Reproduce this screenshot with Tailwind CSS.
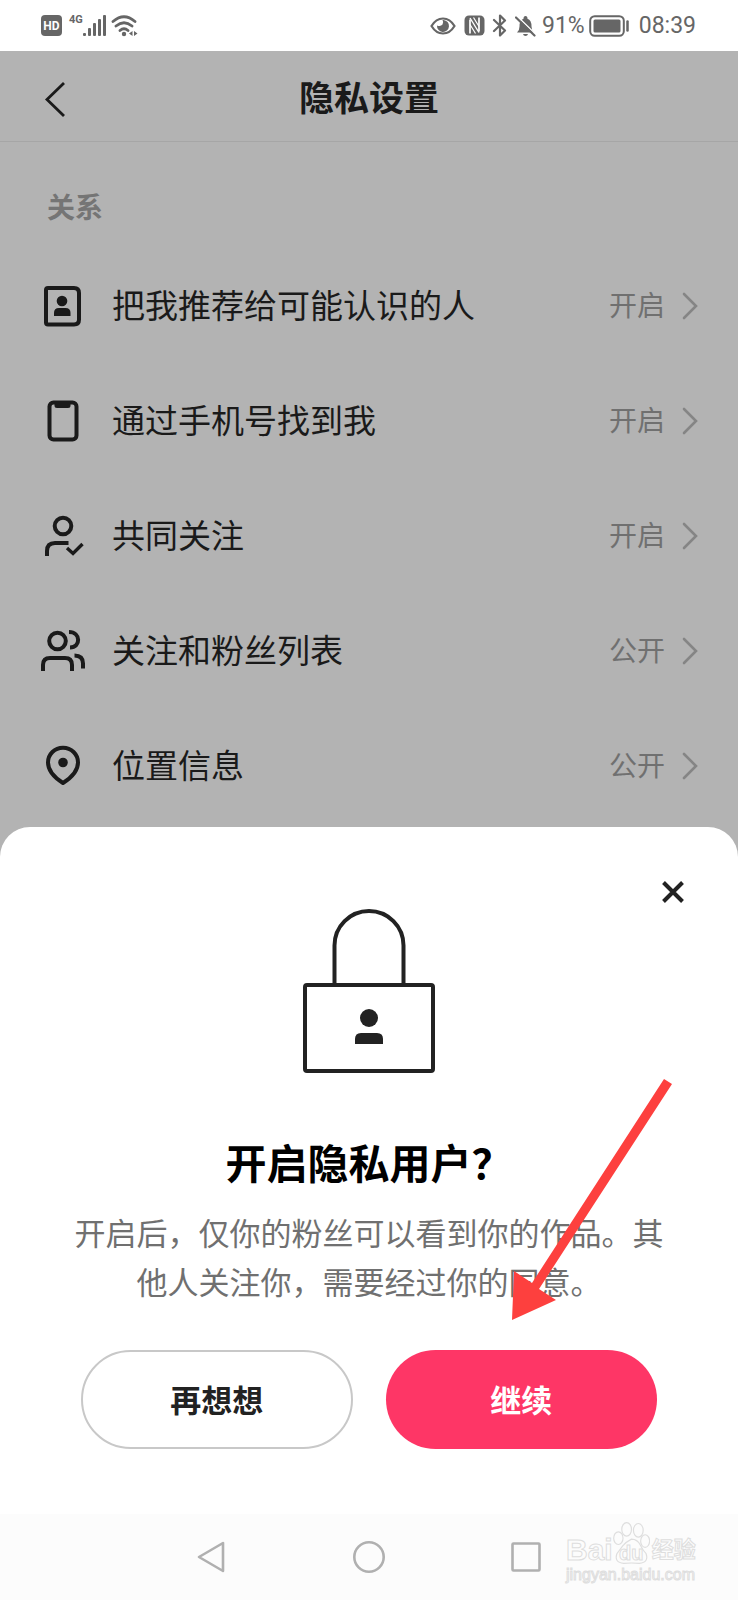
<!DOCTYPE html>
<html lang="zh-CN">
<head>
<meta charset="utf-8">
<meta name="viewport" content="width=device-width, initial-scale=1">
<title>隐私设置</title>
<script src="https://cdn.jsdelivr.net/npm/@tailwindcss/browser@4"></script>
</head>
<body class="flex min-h-screen flex-col bg-[#b3b3b3] font-['Noto_Sans_CJK_SC',sans-serif] text-[#1a1a1a]">

<!-- Status bar -->
<div class="flex h-[51px] items-center justify-between bg-white pr-[42px] pl-[41px] font-[Roboto,sans-serif] text-[#666]">
  <div class="flex items-center">
    <span class="flex h-[21px] w-[21px] items-center justify-center rounded-[4px] bg-[#666] text-[12px] leading-none font-bold text-white">HD</span>
    <span class="ml-[7px] h-[23px] text-[11px] leading-[12px] font-bold">4G</span>
    <svg class="h-[22px] w-[24px]" viewBox="0 0 24 22" fill="#666" aria-hidden="true"><rect x="0" y="18" width="3" height="3" rx="1"/><rect x="5" y="13" width="3" height="8" rx="1"/><rect x="10" y="8" width="3" height="13" rx="1"/><rect x="15" y="4" width="3" height="17" rx="1"/><rect x="20" y="0" width="3" height="21" rx="1"/></svg>
    <svg class="ml-[4px] h-[22px] w-[27px]" viewBox="0 0 27 22" fill="none" stroke="#666" stroke-width="2.8" stroke-linecap="round" aria-hidden="true"><path d="M2 6.5Q13 -3 24 6.500M5 11q8-6.500 16 0M9 15.500q4-3.500 8 0"/><circle cx="13" cy="19" r="2.2" fill="#666" stroke="none"/><path d="M21.500 16v5l-3.500-2.500zM23 16v5l3.500-2.500z" fill="#666" stroke="none"/></svg>
  </div>
  <div class="flex items-center">
    <svg class="h-[18px] w-[26px]" viewBox="0 0 26 18" aria-hidden="true"><path d="M1.500 9Q6 1.500 13 1.500T24.500 9Q20 16.500 13 16.500T1.500 9z" fill="none" stroke="#666" stroke-width="2.200"/><path d="M13.500 3A6 6 0 1 1 7 8.500Q10.500 10 12.500 7.600Q14 5.400 12.500 3z" fill="#666"/></svg>
    <svg class="ml-[8px] h-[21px] w-[21px]" viewBox="0 0 21 21" aria-hidden="true"><rect x=".5" y=".5" width="20" height="20" rx="4.500" fill="#666"/><path d="M6 18.500V4.500M15 16.500V2.500" stroke="#fff" stroke-width="1.700"/><path d="M6 3l9 14.500" stroke="#fff" stroke-width="1.400"/><path d="M9.500 2.500l5.500 9M6 9.500l5.500 9" stroke="#fff" stroke-width="1.200"/></svg>
    <svg class="ml-[7px] h-[23px] w-[16px]" viewBox="0 0 16 23" fill="none" stroke="#666" stroke-width="2.2" stroke-linejoin="round" stroke-linecap="round" aria-hidden="true"><path d="M2 6l11 10.500-5 5V1.500l5 5L2 17"/></svg>
    <svg class="ml-[7px] h-[22px] w-[21px]" viewBox="0 0 21 22" aria-hidden="true"><path d="M2 17.500q2.500-2 2.500-6 0-6.500 4-7.700Q8.500 1 10.500 1t2 2.800q4 1.200 4 7.700 0 4 2.500 6z" fill="#666"/><path d="M8 19h5q-.5 2-2.500 2T8 19z" fill="#666"/><path d="M2.500 1.500L21 19.500" stroke="#fff" stroke-width="1.500"/><path d="M1 2.500L19.500 20.500" stroke="#666" stroke-width="2.200" stroke-linecap="round"/></svg>
    <span class="ml-[6px] text-[23px] leading-none">91%</span>
    <svg class="ml-[4px] h-[22px] w-[41px]" viewBox="0 0 41 22" aria-hidden="true"><rect x="1.200" y="1.200" width="33.600" height="19.600" rx="4.500" fill="none" stroke="#666" stroke-width="2"/><rect x="4.500" y="4.500" width="27" height="13" rx="1.500" fill="#666"/><path d="M38.500 6.500v9" stroke="#666" stroke-width="2.500" stroke-linecap="round"/></svg>
    <span class="ml-[9px] text-[23px] leading-none">08:39</span>
  </div>
</div>

<header class="grid h-[91px] grid-cols-[1fr_auto_1fr] items-center border-b border-[#a6a6a6] px-[40px]">
  <button type="button" aria-label="返回" class="w-[32px]">
    <svg class="h-[44px] w-[32px]" viewBox="0 0 32 44" fill="none" stroke="#1a1a1a" stroke-width="2.800"><path d="M24 9L7 25.500 24 42"/></svg>
  </button>
  <h1 class="text-[35px] leading-[52px] font-bold">隐私设置</h1>
</header>

<main class="px-[39px] pt-[43px] pb-1">
  <h2 class="px-2 text-[28px] leading-[42px] font-bold text-[#757575]">关系</h2>
  <ul class="mt-[21px]">
    <li><button type="button" class="flex h-[115px] w-full items-center text-left">
      <svg class="h-[48px] w-[48px]" viewBox="0 0 48 48" aria-hidden="true"><path d="M9 6H35q5 0 5 5V37.500q0 5-5 5H9q-2 0-2-2V8q0-2 2-2z" fill="none" stroke="#1a1a1a" stroke-width="4"/><circle cx="23" cy="19" r="5.300" fill="#1a1a1a"/><path d="M15 34v-3q0-5 5-5h6.500q5 0 5 5v3z" fill="#1a1a1a"/></svg>
      <span class="ml-[25px] flex-1 pb-[3px] text-[33px] leading-[48px]">把我推荐给可能认识的人</span>
      <span class="pb-[3px] text-[28px] leading-[42px] text-[#707070]">开启</span>
      <svg class="ml-[14px] h-[30px] w-[20px]" viewBox="0 0 20 30" fill="none" stroke="#858585" stroke-width="2.600" stroke-linecap="round" aria-hidden="true"><path d="M5 3l12 12L5 27"/></svg>
    </button></li>
    <li><button type="button" class="flex h-[115px] w-full items-center text-left">
      <svg class="h-[48px] w-[48px]" viewBox="0 0 48 48" aria-hidden="true"><rect x="10.500" y="5.500" width="27" height="37" rx="4" fill="none" stroke="#1a1a1a" stroke-width="4"/><path d="M15.500 5.500h16v3q0 2.500-2.500 2.500H18q-2.500 0-2.500-2.500z" fill="#1a1a1a"/></svg>
      <span class="ml-[25px] flex-1 pb-[3px] text-[33px] leading-[48px]">通过手机号找到我</span>
      <span class="pb-[3px] text-[28px] leading-[42px] text-[#707070]">开启</span>
      <svg class="ml-[14px] h-[30px] w-[20px]" viewBox="0 0 20 30" fill="none" stroke="#858585" stroke-width="2.600" stroke-linecap="round" aria-hidden="true"><path d="M5 3l12 12L5 27"/></svg>
    </button></li>
    <li><button type="button" class="flex h-[115px] w-full items-center text-left">
      <svg class="h-[48px] w-[48px]" viewBox="0 0 48 48" fill="none" stroke="#1a1a1a" stroke-width="4" aria-hidden="true"><circle cx="24" cy="14" r="8.300"/><path d="M29.500 31H16q-8 0-8 8v5"/><path d="M28 36l6 5.500L43.500 32" stroke-width="3.400"/></svg>
      <span class="ml-[25px] flex-1 pb-[3px] text-[33px] leading-[48px]">共同关注</span>
      <span class="pb-[3px] text-[28px] leading-[42px] text-[#707070]">开启</span>
      <svg class="ml-[14px] h-[30px] w-[20px]" viewBox="0 0 20 30" fill="none" stroke="#858585" stroke-width="2.600" stroke-linecap="round" aria-hidden="true"><path d="M5 3l12 12L5 27"/></svg>
    </button></li>
    <li><button type="button" class="flex h-[115px] w-full items-center text-left">
      <svg class="h-[48px] w-[48px]" viewBox="0 0 48 48" fill="none" stroke="#1a1a1a" stroke-width="4" aria-hidden="true"><circle cx="18.500" cy="14" r="8.300"/><path d="M4 44v-6q0-7 7-7h15q7 0 7 7v6M30 5c12 0 12 15.500 1 15.500M35.500 28.500q8.500 0 8.500 8v5"/></svg>
      <span class="ml-[25px] flex-1 pb-[3px] text-[33px] leading-[48px]">关注和粉丝列表</span>
      <span class="pb-[3px] text-[28px] leading-[42px] text-[#707070]">公开</span>
      <svg class="ml-[14px] h-[30px] w-[20px]" viewBox="0 0 20 30" fill="none" stroke="#858585" stroke-width="2.600" stroke-linecap="round" aria-hidden="true"><path d="M5 3l12 12L5 27"/></svg>
    </button></li>
    <li><button type="button" class="flex h-[115px] w-full items-center text-left">
      <svg class="h-[48px] w-[48px]" viewBox="0 0 48 48" aria-hidden="true"><path d="M24 41Q9 31.500 9 20.500a15 14.800 0 0 1 30 0Q39 31.500 24 41z" fill="none" stroke="#1a1a1a" stroke-width="4" stroke-linejoin="round"/><circle cx="24" cy="20.500" r="4.800" fill="#1a1a1a"/></svg>
      <span class="ml-[25px] flex-1 pb-[3px] text-[33px] leading-[48px]">位置信息</span>
      <span class="pb-[3px] text-[28px] leading-[42px] text-[#707070]">公开</span>
      <svg class="ml-[14px] h-[30px] w-[20px]" viewBox="0 0 20 30" fill="none" stroke="#858585" stroke-width="2.600" stroke-linecap="round" aria-hidden="true"><path d="M5 3l12 12L5 27"/></svg>
    </button></li>
  </ul>
</main>

<!-- Bottom sheet -->
<section role="dialog" aria-labelledby="sheet-title" class="relative flex flex-1 flex-col items-center rounded-t-[30px] bg-white px-[72px] pt-[82px] pb-[65px]">
  <button type="button" aria-label="关闭" class="absolute top-[49px] right-[49px] p-1">
    <svg class="h-[24px] w-[24px]" viewBox="0 0 24 24" stroke="#222" stroke-width="4"><path d="M2.500 2.500l19 19M21.500 2.500l-19 19"/></svg>
  </button>
  <svg class="h-[165px] w-[132px]" viewBox="0 0 132 165" fill="none" stroke="#222" stroke-width="4" aria-hidden="true"><path d="M31.500 75V36.500a34.500 34.500 0 0 1 69 0V75"/><rect x="2" y="76" width="128" height="86" rx="2"/><circle cx="66" cy="109" r="9" fill="#222" stroke="none"/><path d="M52 135v-5q0-6 6-6h16q6 0 6 6v5z" fill="#222" stroke="none"/></svg>
  <h2 id="sheet-title" class="mt-[59px] text-[41px] leading-[56px] font-bold text-black">开启隐私用户？</h2>
  <p class="mt-[18px] text-center text-[31px] leading-[49px] text-[#707070]">开启后，仅你的粉丝可以看到你的作品。其他人关注你，需要经过你的同意。</p>
  <div class="mt-[45px] grid w-full grid-cols-2 gap-[33px] px-[9px]">
    <button type="button" class="h-[99px] rounded-full border-2 border-[#c8c8c8] text-[31px] font-bold text-[#222]">再想想</button>
    <button type="button" class="h-[99px] rounded-full bg-[#fe3666] text-[31px] font-bold text-white">继续</button>
  </div>
  <!-- Pointer arrow over the dialog text -->
  <svg class="pointer-events-none absolute top-[252px] right-[65px] h-[242px] w-[161px]" viewBox="0 0 161 242" fill="#fd403e" aria-hidden="true"><path d="M152 0L160 5 27 210l17 11L0 241 2 192l18 12z"/></svg>
</section>

<!-- System navigation -->
<nav class="relative flex h-[86px] items-center justify-center gap-[125px] bg-[#fcfcfc]">
  <button type="button" aria-label="后退"><svg class="h-[34px] w-[32px]" viewBox="0 0 32 34" fill="none" stroke="#b0b0b0" stroke-width="2.600" stroke-linejoin="round"><path d="M3 17L27 3V31z"/></svg></button>
  <button type="button" aria-label="主页"><svg class="h-[34px] w-[32px]" viewBox="0 0 32 34" fill="none" stroke="#b0b0b0" stroke-width="2.600"><circle cx="16" cy="17" r="14.700"/></svg></button>
  <button type="button" aria-label="最近任务"><svg class="h-[34px] w-[32px]" viewBox="0 0 32 34" fill="none" stroke="#b0b0b0" stroke-width="2.600"><rect x="2.500" y="3.500" width="27" height="27" rx="1"/></svg></button>
  <!-- Watermark -->
  <div class="absolute right-[38px] bottom-[15px] flex w-[134px] flex-col font-['Liberation_Sans','Noto_Sans_CJK_SC',sans-serif] text-[#fcfcfc] [-webkit-text-stroke:1px_#dedede]">
    <div class="flex items-end">
      <span class="text-[30px] leading-[30px] font-bold">Bai</span>
      <span class="relative flex h-[44px] w-[37px] items-end justify-center">
        <svg class="absolute inset-0 h-[44px] w-[37px]" viewBox="0 0 38 44" fill="#fcfcfc" stroke="#dedede" stroke-width="1.200" aria-hidden="true"><path d="M19 18q6 0 9 6t6 9q3 9-7 10-8-1-16 0Q1 42 4 33q3-4 6-8t9-7z"/><ellipse cx="5.5" cy="17" rx="4.800" ry="6.500"/><ellipse cx="14" cy="8" rx="5" ry="7"/><ellipse cx="26" cy="9" rx="5" ry="7"/><ellipse cx="33" cy="20" rx="4.600" ry="6.500"/></svg>
        <span class="relative text-[20px] leading-[24px] font-bold">du</span>
      </span>
      <span class="ml-[2px] text-[22px] leading-[30px] font-bold">经验</span>
    </div>
    <span class="text-[16px] leading-[20px] whitespace-nowrap">jingyan.baidu.com</span>
  </div>
</nav>
</body>
</html>
